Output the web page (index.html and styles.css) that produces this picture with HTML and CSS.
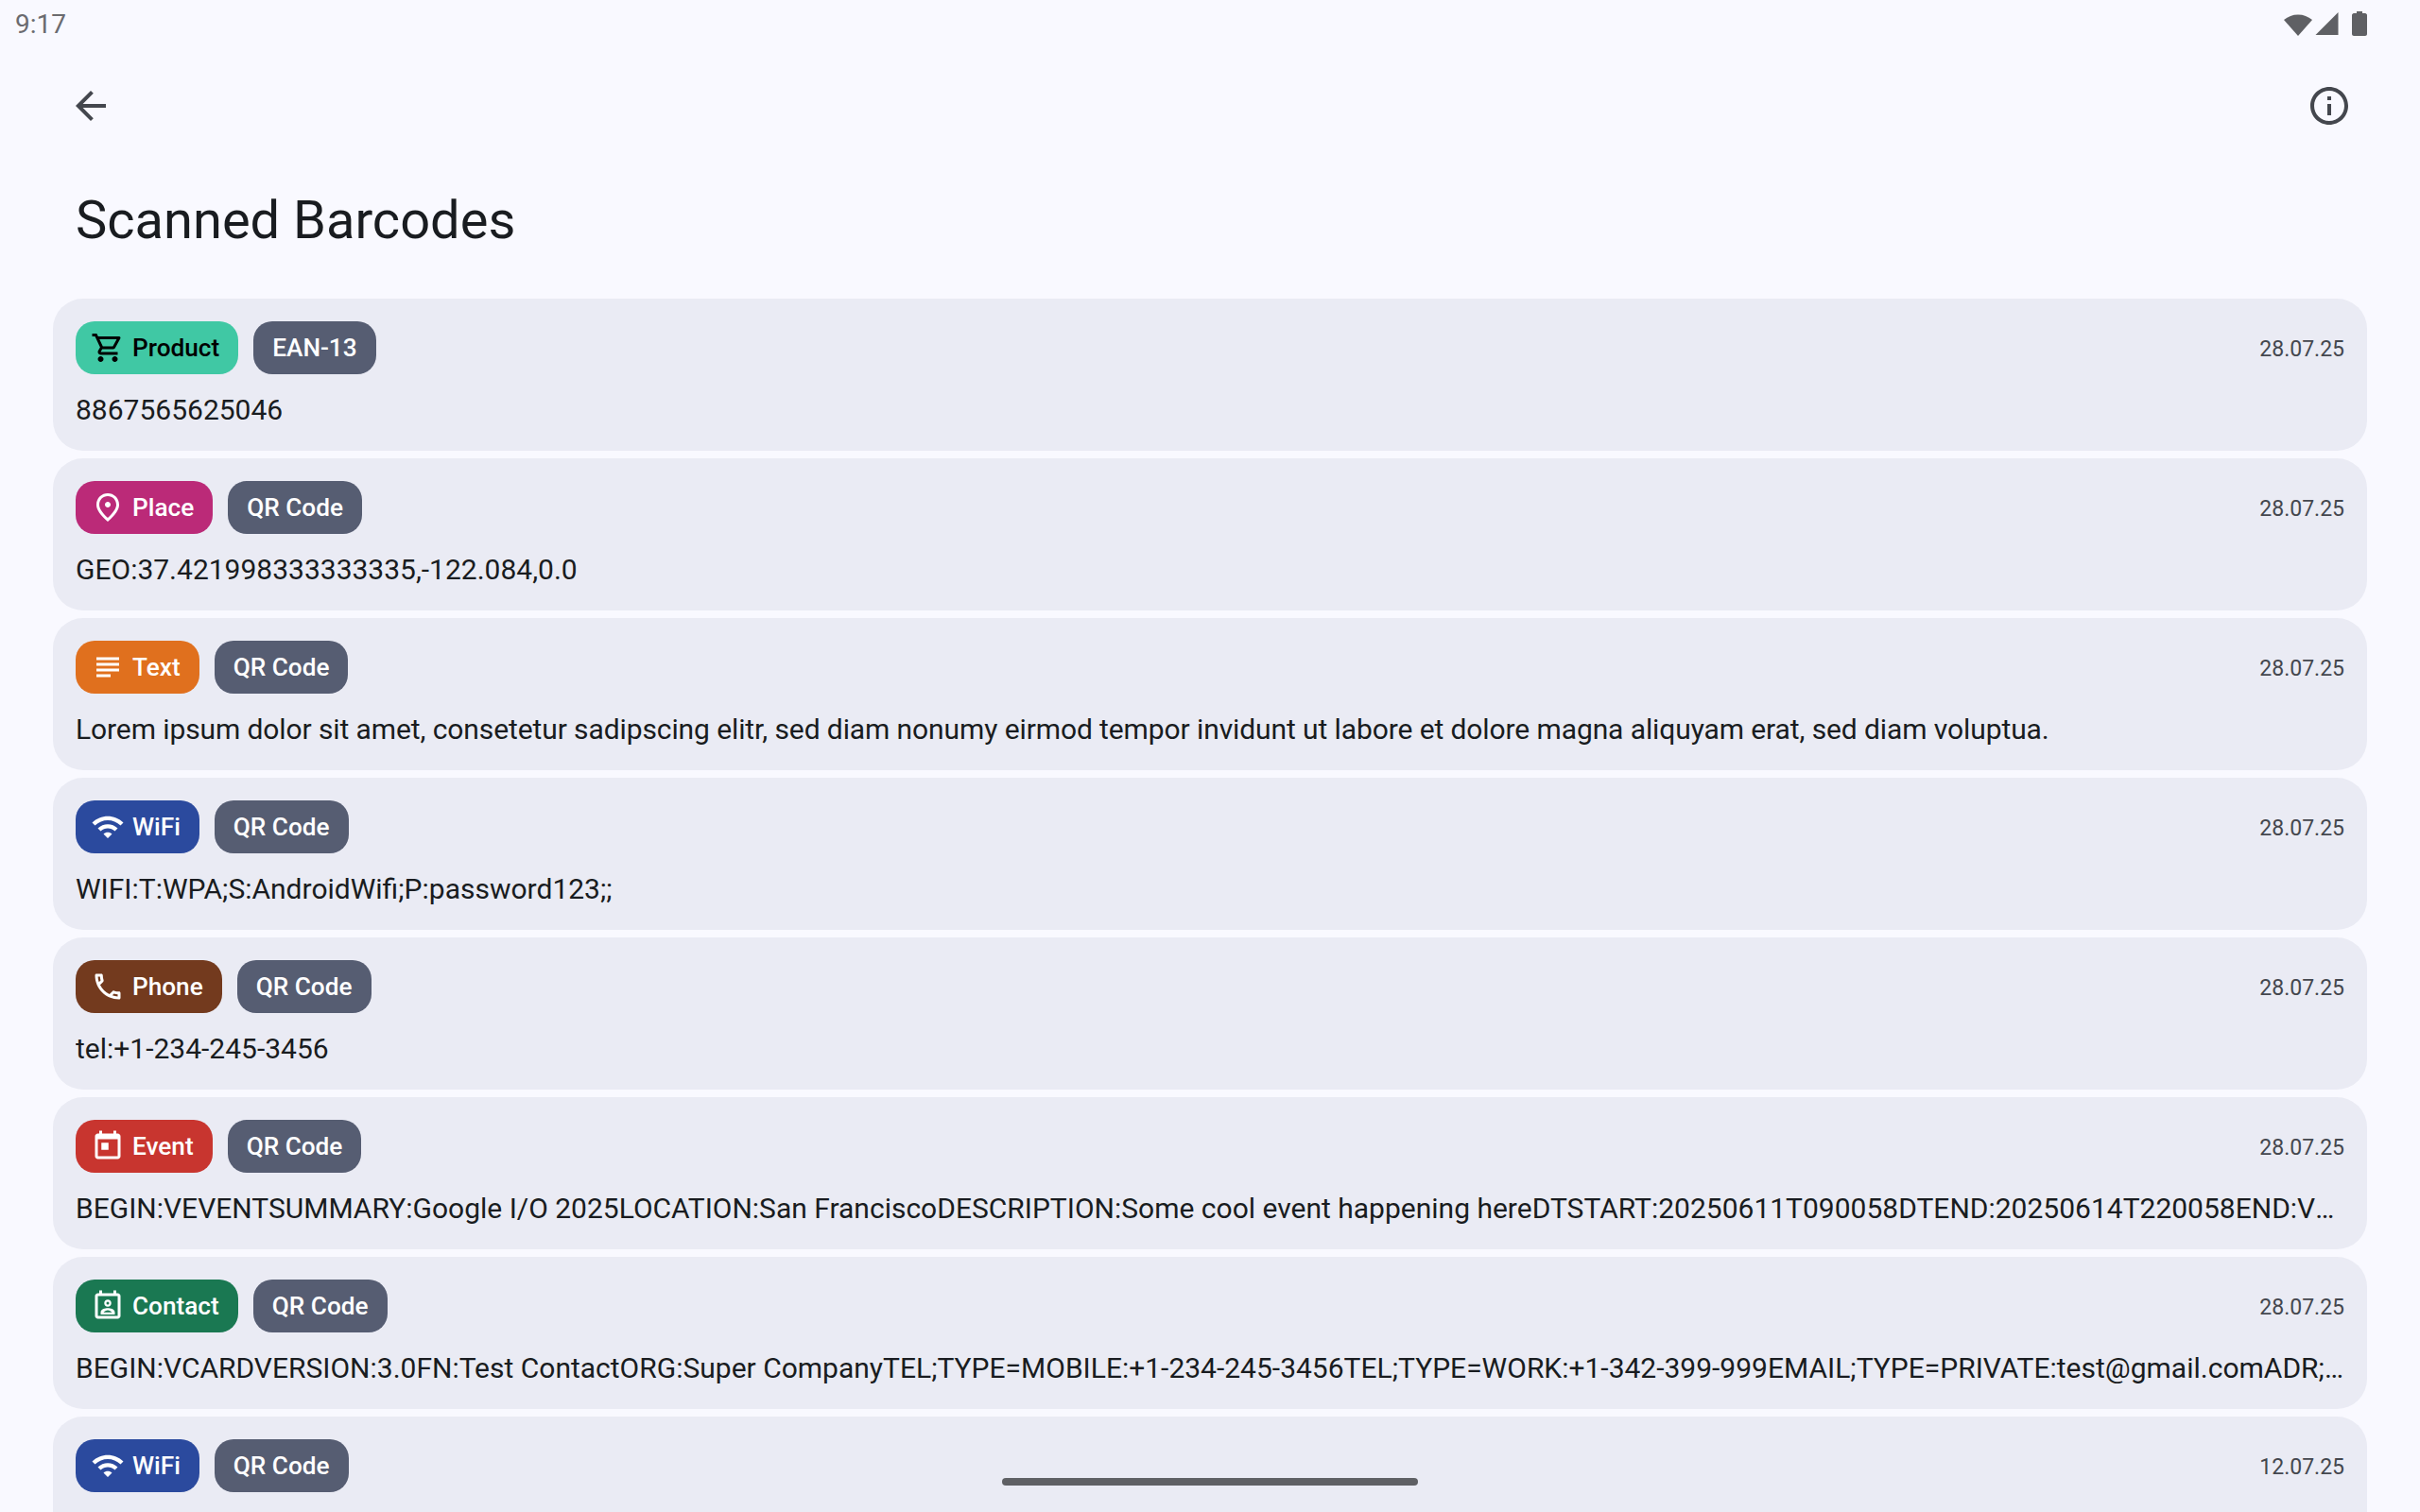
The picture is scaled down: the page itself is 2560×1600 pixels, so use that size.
FILE: index.html
```html
<!DOCTYPE html>
<html lang="en">

<head>
    <meta charset="utf-8">
    <title>Scanned Barcodes</title>
    <link rel="stylesheet" href="styles.css">
</head>

<body>
    <div class="status">
        <span>9:17</span>
        <div class="status_icons">
            <svg class="st_wifi" viewBox="0 0 30 25"><path d="M15 25L0 8A23 23 0 0 1 30 8z" /></svg>
            <svg class="st_signal" viewBox="0 0 24 24"><path d="M24 0v24H0z" /></svg>
            <svg class="st_batt" viewBox="0 0 16 26"><path d="M5 0h6v2h3c1 0 2 1 2 2v20c0 1-1 2-2 2H2c-1 0-2-1-2-2V4c0-1 1-2 2-2h3z" /></svg>
        </div>
    </div>

    <div class="topbar">
        <svg class="top_icon" viewBox="0 0 24 24"><path d="M20 11H7.83l5.59-5.59L12 4l-8 8 8 8 1.41-1.41L7.83 13H20v-2z" /></svg>
        <svg class="top_icon" viewBox="0 0 24 24"><path d="M11 7h2v2h-2zm0 4h2v6h-2zm1-9C6.48 2 2 6.48 2 12s4.48 10 10 10 10-4.48 10-10S17.52 2 12 2zm0 18c-4.41 0-8-3.59-8-8s3.59-8 8-8 8 3.59 8 8-3.59 8-8 8z" /></svg>
    </div>

    <h1 class="title">Scanned Barcodes</h1>

    <ul class="list">
        <li>
            <div class="row">
                <span class="chip product">
                    <svg viewBox="0 0 24 24"><path d="M15.55 13c.75 0 1.41-.41 1.75-1.03l3.58-6.49c.37-.66-.11-1.48-.87-1.48H5.21l-.94-2H1v2h2l3.6 7.59-1.35 2.44C4.52 15.37 5.48 17 7 17h12v-2H7l1.1-2h7.45zM6.16 6h12.15l-2.76 5H8.53L6.16 6zM7 18c-1.1 0-1.99.9-1.99 2S5.9 22 7 22s2-.9 2-2-.9-2-2-2zm10 0c-1.1 0-1.99.9-1.99 2s.89 2 1.99 2 2-.9 2-2-.9-2-2-2z" /></svg>
                    Product
                </span>
                <span class="chip format">EAN-13</span>
                <span class="date">28.07.25</span>
            </div>
            <p class="value">8867565625046</p>
        </li>
        <li>
            <div class="row">
                <span class="chip place">
                    <svg viewBox="0 0 24 24"><path d="M12 12c-1.1 0-2-.9-2-2s.9-2 2-2 2 .9 2 2-.9 2-2 2zm6-1.8C18 6.57 15.35 4 12 4s-6 2.57-6 6.2c0 2.34 1.95 5.44 6 9.14 4.05-3.7 6-6.8 6-9.14zM12 2c4.2 0 8 3.22 8 8.2 0 3.32-2.67 7.25-8 11.8-5.33-4.55-8-8.48-8-11.8C4 5.22 7.8 2 12 2z" /></svg>
                    Place
                </span>
                <span class="chip format">QR Code</span>
                <span class="date">28.07.25</span>
            </div>
            <p class="value">GEO:37.421998333333335,-122.084,0.0</p>
        </li>
        <li>
            <div class="row">
                <span class="chip text">
                    <svg viewBox="0 0 24 24"><path d="M14 17H4v2h10v-2zm6-8H4v2h16V9zM4 15h16v-2H4v2zM4 5v2h16V5H4z" /></svg>
                    Text
                </span>
                <span class="chip format">QR Code</span>
                <span class="date">28.07.25</span>
            </div>
            <p class="value prose">Lorem ipsum dolor sit amet, consetetur sadipscing elitr, sed diam nonumy eirmod tempor invidunt ut labore et dolore magna aliquyam erat, sed diam voluptua.</p>
        </li>
        <li>
            <div class="row">
                <span class="chip wifi">
                    <svg viewBox="0 0 24 24"><path d="M1 9l2 2c4.97-4.97 13.03-4.97 18 0l2-2C16.93 2.93 7.08 2.93 1 9zm8 8l3 3 3-3c-1.65-1.66-4.34-1.66-6 0zm-4-4l2 2c2.76-2.76 7.24-2.76 10 0l2-2C15.14 9.14 8.87 9.14 5 13z" /></svg>
                    WiFi
                </span>
                <span class="chip format">QR Code</span>
                <span class="date">28.07.25</span>
            </div>
            <p class="value">WIFI:T:WPA;S:AndroidWifi;P:password123;;</p>
        </li>
        <li>
            <div class="row">
                <span class="chip phone">
                    <svg viewBox="0 0 24 24"><path d="M6.54 5c.06.89.21 1.76.45 2.59l-1.2 1.2c-.41-1.2-.67-2.47-.76-3.79h1.51m9.86 12.02c.85.24 1.72.39 2.6.45v1.49c-1.32-.09-2.59-.35-3.8-.75l1.2-1.19M7.5 3H4c-.55 0-1 .45-1 1 0 9.39 7.61 17 17 17 .55 0 1-.45 1-1v-3.49c0-.55-.45-1-1-1-1.24 0-2.45-.2-3.57-.57-.1-.04-.21-.05-.31-.05-.26 0-.51.1-.71.29l-2.2 2.2c-2.83-1.45-5.15-3.76-6.59-6.59l2.2-2.2c.28-.28.36-.67.25-1.02C8.7 6.45 8.5 5.25 8.5 4c0-.55-.45-1-1-1z" /></svg>
                    Phone
                </span>
                <span class="chip format">QR Code</span>
                <span class="date">28.07.25</span>
            </div>
            <p class="value">tel:+1-234-245-3456</p>
        </li>
        <li>
            <div class="row">
                <span class="chip event">
                    <svg viewBox="0 0 24 24"><path d="M19 3h-1V1h-2v2H8V1H6v2H5c-1.1 0-2 .9-2 2v14c0 1.1.9 2 2 2h14c1.1 0 2-.9 2-2V5c0-1.1-.9-2-2-2zm0 16H5V7h14v12zM7.500 9.500h5v5h-5z" /></svg>
                    Event
                </span>
                <span class="chip format">QR Code</span>
                <span class="date">28.07.25</span>
            </div>
            <p class="value">BEGIN:VEVENTSUMMARY:Google I/O 2025LOCATION:San FranciscoDESCRIPTION:Some cool event happening hereDTSTART:20250611T090058DTEND:20250614T220058END:VEVENT</p>
        </li>
        <li>
            <div class="row">
                <span class="chip contact">
                    <svg viewBox="0 0 24 24"><path d="M19 3h-1V1h-2v2H8V1H6v2H5c-1.1 0-2 .9-2 2v14c0 1.1.9 2 2 2h14c1.1 0 2-.9 2-2V5c0-1.1-.9-2-2-2zm0 16H5V5h14v14zM12 12.500c1.400 0 2.500-1.100 2.500-2.500S13.400 7.500 12 7.500 9.500 8.600 9.500 10s1.100 2.500 2.500 2.500zm0-3.500a1 1 0 1 1 0 2 1 1 0 0 1 0-2zm5 7.500c0-2.500-3.300-3-5-3s-5 .5-5 3V18h10v-1.500zM9 16.500c.5-.8 2-1.500 3-1.500s2.500.7 3 1.500H9z" /></svg>
                    Contact
                </span>
                <span class="chip format">QR Code</span>
                <span class="date">28.07.25</span>
            </div>
            <p class="value">BEGIN:VCARDVERSION:3.0FN:Test ContactORG:Super CompanyTEL;TYPE=MOBILE:+1-234-245-3456TEL;TYPE=WORK:+1-342-399-999EMAIL;TYPE=PRIVATE:test@gmail.comADR;TYPE=WORK:Street 1</p>
        </li>
        <li>
            <div class="row">
                <span class="chip wifi">
                    <svg viewBox="0 0 24 24"><path d="M1 9l2 2c4.97-4.97 13.03-4.97 18 0l2-2C16.93 2.93 7.08 2.93 1 9zm8 8l3 3 3-3c-1.65-1.66-4.34-1.66-6 0zm-4-4l2 2c2.76-2.76 7.24-2.76 10 0l2-2C15.14 9.14 8.87 9.14 5 13z" /></svg>
                    WiFi
                </span>
                <span class="chip format">QR Code</span>
                <span class="date">12.07.25</span>
            </div>
        </li>
    </ul>

    <div class="home_bar"></div>
</body>

</html>
```
FILE: styles.css
```css
* {
    padding: 0;
    margin: 0;
    box-sizing: border-box;
}

html,
body {
    height: 100%;
    overflow: hidden;
    font-family: Roboto, sans-serif;
    color: #191c20;
    background: #f9f9ff;
}

ul,
li {
    list-style: none;
}

.status {
    height: 48px;
    padding: 2px 56px 0 16px;
    display: flex;
    align-items: center;
    justify-content: space-between;
    font-size: 28px;
    color: #6b6b6f;
}

.status_icons {
    display: flex;
    align-items: center;
    gap: 3px;
}

.status_icons svg {
    fill: #5f6064;
    display: block;
}

.st_wifi {
    width: 30px;
    height: 25px;
}

.st_signal {
    width: 25px;
    height: 24px;
}

.st_batt {
    width: 16px;
    height: 26px;
    margin-left: 11px;
}

.topbar {
    height: 128px;
    padding: 0 20px 0 72px;
    display: flex;
    align-items: center;
    justify-content: space-between;
}

.top_icon {
    width: 48px;
    height: 48px;
    fill: #44474e;
}

.topbar .top_icon:last-child {
    margin-right: 52px;
}

.title {
    padding: 0 80px;
    font-size: 56px;
    font-weight: 400;
    line-height: 72px;
    margin-top: 21px;
}

.list {
    margin-top: 47px;
    padding: 0 56px;
    display: flex;
    flex-direction: column;
    gap: 8px;
}

.list li {
    height: 161px;
    padding: 24px;
    background: #eaebf4;
    border-radius: 32px;
    flex-shrink: 0;
}

.row {
    display: flex;
    align-items: center;
    gap: 16px;
}

.chip {
    height: 56px;
    padding: 0 20px;
    display: flex;
    align-items: center;
    gap: 8px;
    border-radius: 20px;
    font-size: 26.2px;
    font-weight: 500;
    color: #fff;
}

.chip svg {
    width: 36px;
    height: 36px;
    margin-left: -4px;
    fill: currentColor;
}

.format {
    background: #565d72;
}

.product {
    background: #40c8a4;
    color: #000;
}

.place {
    background: #bb2a78;
}

.text {
    background: #e0701e;
}

.wifi {
    background: #2b4a9e;
}

.phone {
    background: #733a1e;
}

.event {
    background: #c8352f;
}

.contact {
    background: #1a7852;
}

.date {
    margin-left: auto;
    padding-top: 3px;
    font-size: 23px;
    color: #44474e;
}

.value {
    margin-top: 14px;
    font-size: 30px;
    line-height: 48px;
    white-space: nowrap;
    overflow: hidden;
    text-overflow: ellipsis;
}

.prose {
    letter-spacing: -0.1px;
}

.home_bar {
    position: fixed;
    left: 1060px;
    bottom: 28px;
    width: 440px;
    height: 8px;
    border-radius: 4px;
    background: #5f6064;
}
```
